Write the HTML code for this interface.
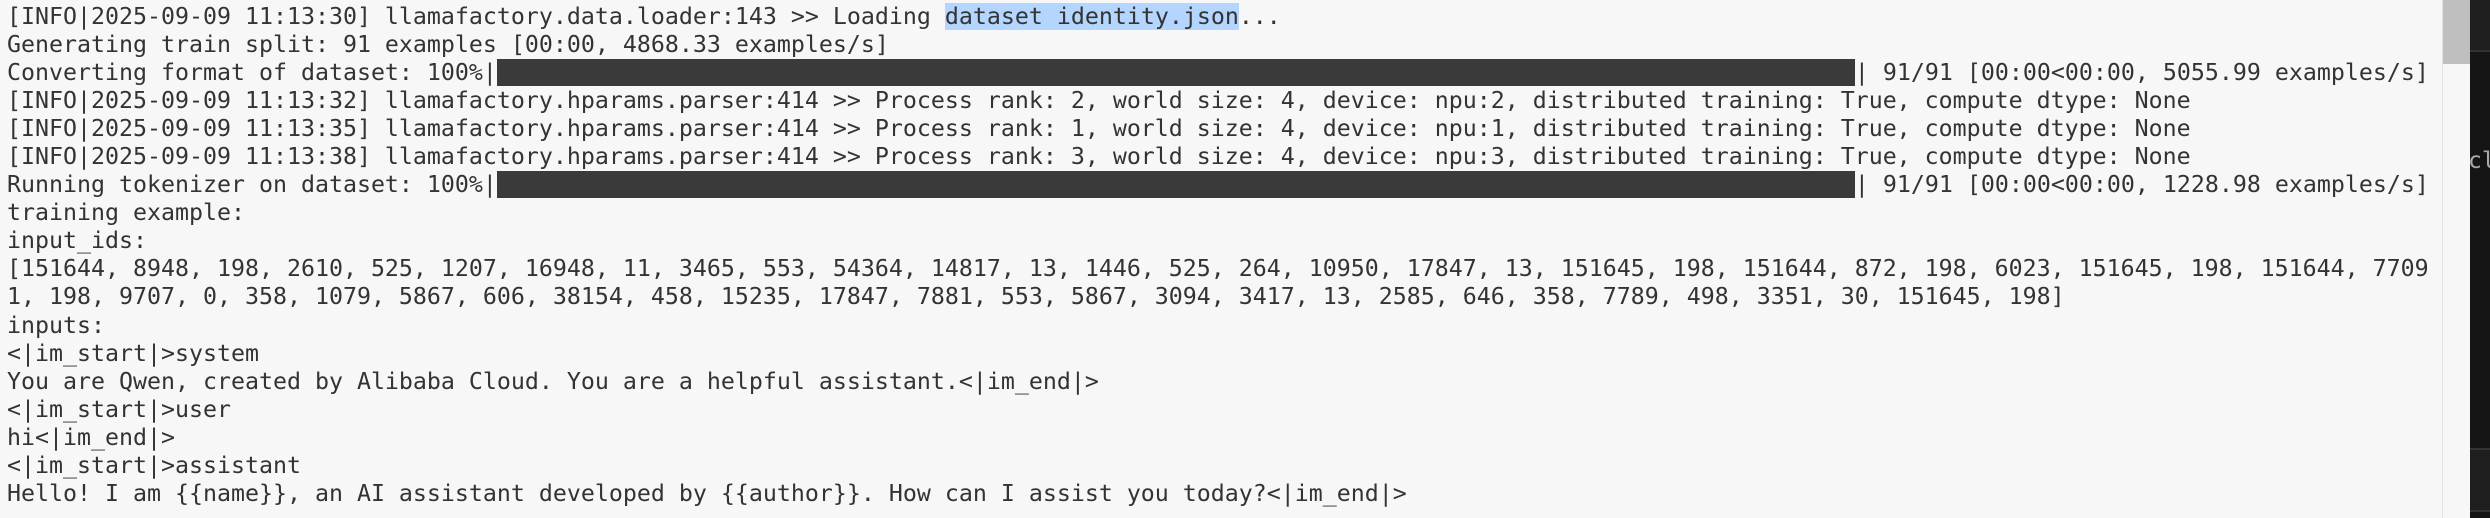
<!DOCTYPE html>
<html><head><meta charset="utf-8"><style>
html,body{margin:0;padding:0;width:2490px;height:518px;overflow:hidden;background:#f7f7f7}
#t{position:absolute;left:7px;top:3px;font-family:"DejaVu Sans Mono","Liberation Mono",monospace;font-size:23.25px;line-height:28.05px;color:#333;white-space:pre}
.hl{background:#b4d5fd}
.bar{display:inline-block;background:#3a3a3a;height:27px;vertical-align:top;margin-top:0px}
#sb{position:absolute;left:2442px;top:0;width:1px;height:518px;background:#e2e2e2}
#th{position:absolute;left:2443px;top:0;width:27px;height:64px;background:#bfbfbf}
#dk{position:absolute;left:2470px;top:0;width:20px;height:518px;background:#151515}
#dk1{position:absolute;left:2470px;top:0;width:20px;height:50px;background:#1f1f1f;border-bottom:2px solid #333}
#dk2{position:absolute;left:2470px;top:448px;width:20px;height:60px;background:#1e1e1e;border-top:2px solid #333;border-bottom:2px solid #333}
#cl{position:absolute;left:2468px;top:148px;font-family:"DejaVu Sans Mono",monospace;font-size:23px;color:#aaa}
</style></head><body>
<div id="t">[INFO|2025-09-09 11:13:30] llamafactory.data.loader:143 &gt;&gt; Loading <span class="hl">dataset identity.json</span>...
Generating train split: 91 examples [00:00, 4868.33 examples/s]
Converting format of dataset: 100%|<span class="bar" style="width:1358px"></span>| 91/91 [00:00&lt;00:00, 5055.99 examples/s]
[INFO|2025-09-09 11:13:32] llamafactory.hparams.parser:414 &gt;&gt; Process rank: 2, world size: 4, device: npu:2, distributed training: True, compute dtype: None
[INFO|2025-09-09 11:13:35] llamafactory.hparams.parser:414 &gt;&gt; Process rank: 1, world size: 4, device: npu:1, distributed training: True, compute dtype: None
[INFO|2025-09-09 11:13:38] llamafactory.hparams.parser:414 &gt;&gt; Process rank: 3, world size: 4, device: npu:3, distributed training: True, compute dtype: None
Running tokenizer on dataset: 100%|<span class="bar" style="width:1358px"></span>| 91/91 [00:00&lt;00:00, 1228.98 examples/s]
training example:
input_ids:
[151644, 8948, 198, 2610, 525, 1207, 16948, 11, 3465, 553, 54364, 14817, 13, 1446, 525, 264, 10950, 17847, 13, 151645, 198, 151644, 872, 198, 6023, 151645, 198, 151644, 7709
1, 198, 9707, 0, 358, 1079, 5867, 606, 38154, 458, 15235, 17847, 7881, 553, 5867, 3094, 3417, 13, 2585, 646, 358, 7789, 498, 3351, 30, 151645, 198]
inputs:
&lt;|im_start|&gt;system
You are Qwen, created by Alibaba Cloud. You are a helpful assistant.&lt;|im_end|&gt;
&lt;|im_start|&gt;user
hi&lt;|im_end|&gt;
&lt;|im_start|&gt;assistant
Hello! I am {{name}}, an AI assistant developed by {{author}}. How can I assist you today?&lt;|im_end|&gt;</div>
<div id="sb"></div><div id="th"></div>
<div id="dk"></div><div id="dk1"></div><div id="dk2"></div>
<div id="cl">cl</div>
</body></html>
